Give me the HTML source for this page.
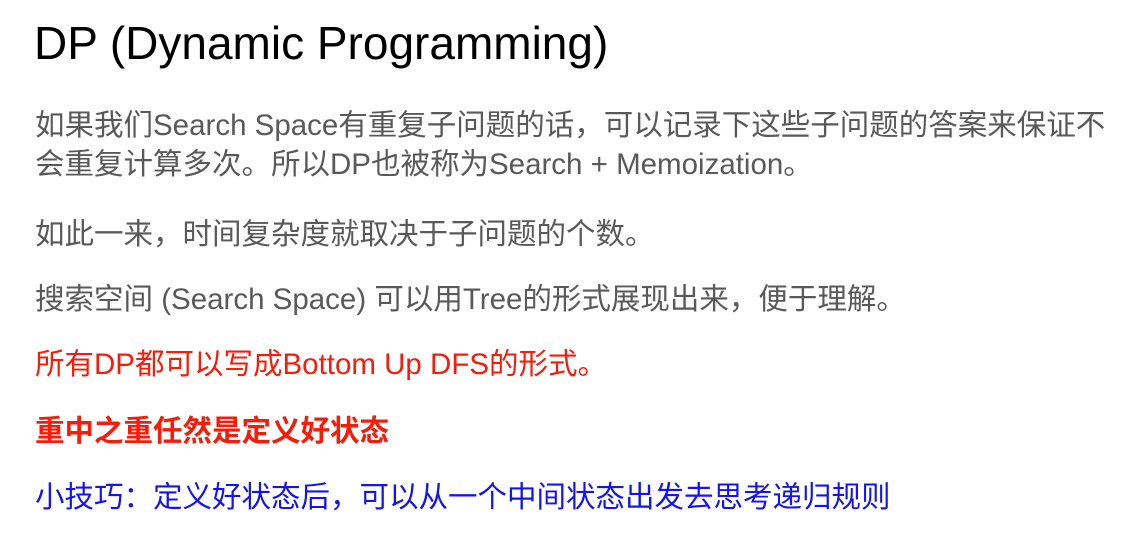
<!DOCTYPE html>
<html><head><meta charset="utf-8"><style>
body{margin:0;width:1122px;height:540px;background:#fff;overflow:hidden;font-family:"Liberation Sans","Noto Sans CJK SC",sans-serif;}
.l{position:absolute;left:35px;white-space:nowrap;font-size:29.5px;line-height:40px;color:#595959;}
h1{position:absolute;left:34px;top:13px;margin:0;font-weight:normal;font-size:46px;line-height:60px;color:#000;}
.r{color:#f51c0a}.b{color:#1414f0}
</style></head><body>
<h1>DP (Dynamic Programming)</h1>
<div class="l" style="top:106px">如果我们Search Space有重复子问题的话，可以记录下这些子问题的答案来保证不</div>
<div class="l" style="top:145px">会重复计算多次。所以DP也被称为Search + Memoization。</div>
<div class="l" style="top:215px">如此一来，时间复杂度就取决于子问题的个数。</div>
<div class="l" style="top:280px">搜索空间 (Search Space) 可以用Tree的形式展现出来，便于理解。</div>
<div class="l r" style="top:345px">所有DP都可以写成Bottom Up DFS的形式。</div>
<div class="l r" style="top:412px;font-weight:bold">重中之重任然是定义好状态</div>
<div class="l b" style="top:478px">小技巧：定义好状态后，可以从一个中间状态出发去思考递归规则</div>
</body></html>
